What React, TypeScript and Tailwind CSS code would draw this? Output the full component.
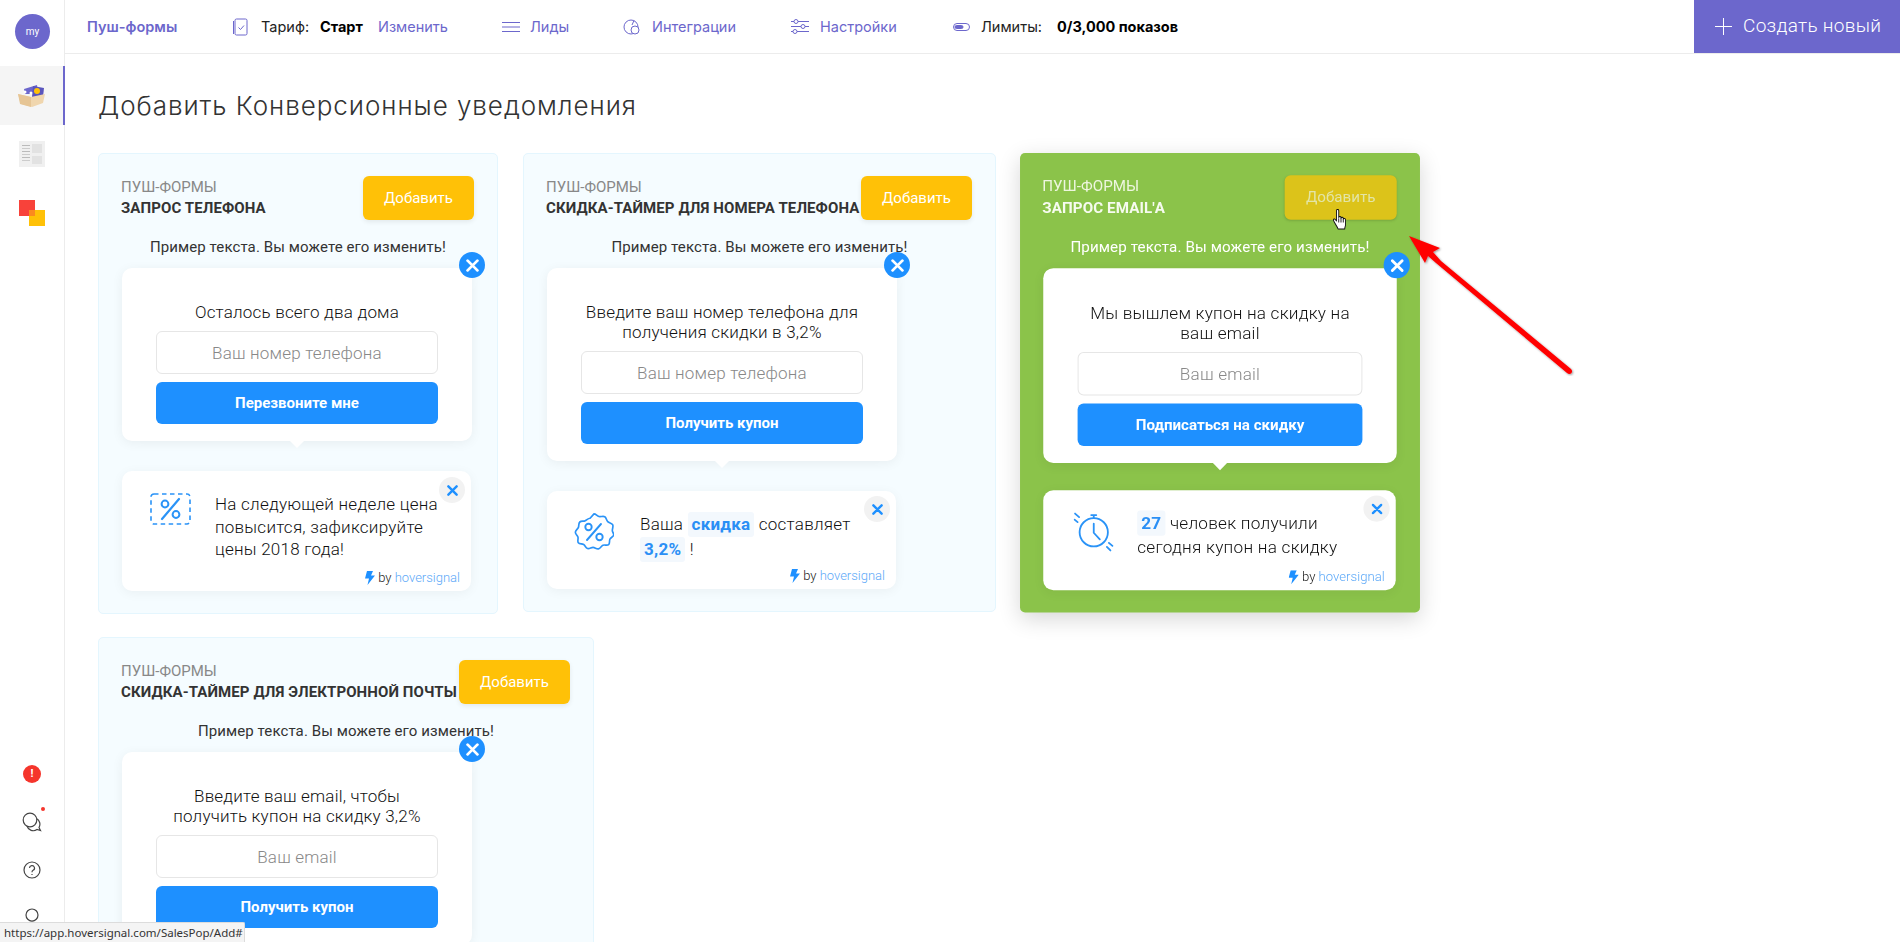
import React from "react";

const X = ({ c = "#fff", s = 12, w = 2.6 }: { c?: string; s?: number; w?: number }) => (
  <svg width={s} height={s} viewBox="0 0 12 12"><path d="M1.5 1.5l9 9M10.5 1.5l-9 9" stroke={c} strokeWidth={w} strokeLinecap="round" /></svg>
);

const By = () => (
  <div className="absolute right-[11px] bottom-[5px] flex items-center text-[13px] leading-[16px] font-light text-[#222]">
    <svg width="10" height="14" viewBox="0 0 10 14" className="mr-[3px]"><path d="M2 0h6L6 4.5h4L2.5 14l1.5-6.5H0z" fill="#1e90ff" /></svg>
    by&nbsp;<span className="text-[#5da9f8]">hoversignal</span>
  </div>
);

const Hi = ({ children }: { children: React.ReactNode }) => (
  <span className="inline-block bg-[#f3f8fd] rounded-[3px] px-[4px] h-[25px] leading-[25px] font-bold text-[#2a8ff5]">{children}</span>
);

const Popup = ({ text, ph, btn }: { text: React.ReactNode; ph: string; btn: string }) => (
  <div className="relative w-[350px] bg-white rounded-[10px] pt-[34px] px-[34px] pb-[17px] shadow-[0_2px_12px_rgba(0,0,0,0.06)]">
    <div className="absolute -right-[13px] -top-[16px] w-[26px] h-[26px] rounded-full bg-[#1e90ff] flex items-center justify-center"><X s={13} /></div>
    <div className="text-center text-[17px] leading-[20px] font-light text-[#111] tracking-[0.2px] whitespace-nowrap">{text}</div>
    <div className="mt-[9px] h-[43px] pt-[2px] border border-[#e6e6e6] rounded-[6px] flex items-center justify-center text-[17px] font-light text-[#888] tracking-[0.2px]">{ph}</div>
    <div className="mt-[8px] h-[42px] rounded-[6px] bg-[#1e90ff] flex items-center justify-center text-white text-[15px] font-bold">{btn}</div>
    <div className="absolute left-1/2 -ml-[7px] -bottom-[7px] w-0 h-0 border-x-[7px] border-x-transparent border-t-[7px] border-t-white" />
  </div>
);

const Push = ({ icon, h, pl, children, closeTop = 5, iconTop }: { icon: React.ReactNode; h: string; pl: string; children: React.ReactNode; closeTop?: number; iconTop: string }) => (
  <div className={`relative w-[349px] bg-white rounded-[10px] shadow-[0_2px_12px_rgba(0,0,0,0.05)] flex ${h}`}>
    <div className={`w-[93px] shrink-0 flex justify-center ${iconTop}`}>{icon}</div>
    <div className={`text-[17px] leading-[22.5px] font-light text-[#111] tracking-[0.25px] whitespace-nowrap ${pl}`}>{children}</div>
    <div className="absolute right-[6px] w-[26px] h-[26px] rounded-full bg-[#f2f2f2] flex items-center justify-center" style={{ top: closeTop }}><X c="#1e90ff" s={11} /></div>
    <By />
  </div>
);

const Percent = () => (
  <svg width="41" height="32" viewBox="0 0 41 32" fill="none" stroke="#2a93f7" strokeWidth="1.6">
    <rect x="1" y="1" width="39" height="30" rx="3" strokeDasharray="4.5 3.5" />
    <circle cx="15" cy="11" r="3.4" strokeWidth="2" /><circle cx="26" cy="21.5" r="3.4" strokeWidth="2" />
    <path d="M12 26L29 6" strokeWidth="2.2" strokeLinecap="round" />
  </svg>
);

const Badge = () => (
  <svg width="40" height="40" viewBox="0 0 40 40" fill="none" stroke="#2a93f7" strokeWidth="1.7" strokeLinejoin="round">
    <path d="M20 1.5c2 0 3 2.2 5 2.7s4.300-.8 6 .2 1.500 3.500 3 5 4 1.300 5 3 -.3 4-.3 6 2 3.300 1.300 5 -3 2.200-3.800 4 .2 4.200-1.300 5.500-4-.2-5.800.6-2.600 3.300-4.600 3.700-3.500-1.500-5.500-1.500-3.700 1.700-5.600 1.100-2.300-3-4-4-4.200-.2-5.400-1.800.2-4-.4-5.900-2.800-3-2.600-5 2.400-3 3.100-4.800 -.1-4.200 1.400-5.500 3.800-.4 5.600-1.300 2.900-2.500 4.900-2.500z" transform="translate(.4 .4) scale(.98)" />
    <circle cx="14.500" cy="15" r="3.200" strokeWidth="1.900" /><circle cx="25.500" cy="25" r="3.200" strokeWidth="1.900" />
    <path d="M13 28L27 12" strokeWidth="1.900" strokeLinecap="round" />
  </svg>
);

const Timer = () => (
  <svg width="40" height="40" viewBox="0 0 40 40" fill="none" stroke="#2a93f7" strokeWidth="1.800" strokeLinecap="round">
    <circle cx="20" cy="20.500" r="14" /><path d="M20 4v2.500M17.500 3.500h5M20 12v9l6 6.500" />
    <path d="M1.500 2l4 3.500M1 8l3 2.500M35 31l3.500 3M33 35l3.500 3.500" />
  </svg>
);

const Card = ({ w, title, children, ex, extra = "", green = false }: { w: string; title: string; children: React.ReactNode; ex: string; extra?: string; green?: boolean }) => (
  <div className={`${w} ${extra} shrink-0 rounded-[5px] pt-[22px] pl-[23px] pr-[23px] pb-[22px] ${green ? "bg-[#8bc34a] shadow-[0_6px_22px_rgba(0,0,0,0.16)]" : "bg-[#f5fcff] border border-[#e4f6fe]"}`}>
    <div className="flex justify-between h-[44px]">
      <div className="pt-[1px] -ml-px">
        <div className={`text-[15px] leading-[21px] ${green ? "text-[#eef6df]" : "text-[#888]"}`}>ПУШ-ФОРМЫ</div>
        <div className={`text-[15px] leading-[21px] font-bold tracking-[0.1px] whitespace-nowrap ${green ? "text-[#f6fbef]" : "text-[#333]"}`}>{title}</div>
      </div>
      {green ? (
        <div className="w-[111px] h-[44px] shrink-0 rounded-[6px] bg-[#dcc31a] text-[#e3e5a6] text-[15px] flex items-center justify-center shadow-sm">Добавить</div>
      ) : (
        <div className="w-[111px] h-[44px] shrink-0 rounded-[6px] bg-[#ffc107] text-white text-[15px] flex items-center justify-center shadow-[0_2px_5px_rgba(0,0,0,0.08)]">Добавить</div>
      )}
    </div>
    <div className={`mt-[17px] h-[20px] text-center text-[15px] leading-[20px] tracking-[0.1px] whitespace-nowrap ${green ? "text-white" : "text-[#333]"}`}>{ex}</div>
    <div className="mt-[11px]">{children}</div>
  </div>
);

const Nav = ({ children }: { children: React.ReactNode }) => <span className="text-[#6c67cc]">{children}</span>;

export default function App() {
  const ex = "Пример текста. Вы можете его изменить!";
  return (
    <div className="relative flex h-[942px] w-[1900px] overflow-hidden bg-white font-['Roboto',sans-serif]">
      <aside className="w-[65px] shrink-0 border-r border-[#ececec] flex flex-col h-[942px]">
        <div className="h-[66px] pt-[14px] flex justify-center shrink-0">
          <div className="w-[35px] h-[35px] rounded-full bg-[#6c67cc] text-white text-[10px] flex items-center justify-center ml-[1px]">my</div>
        </div>
        <div className="h-[59px] bg-[#f5f5f5] border-r-2 border-[#6c67cc] -mr-px flex items-center justify-center shrink-0">
          <svg width="27" height="23" viewBox="0 0 27 23">
            <path d="M6 5l13-4 1 9H7z" fill="#6c67cc" /><path d="M15 2l11 2-1 9H14z" fill="#5a55bd" />
            <circle cx="19" cy="7" r="3" fill="#ffc107" /><circle cx="7" cy="8" r="1.500" fill="#fff" /><circle cx="13" cy="9" r="1.500" fill="#fff" />
            <path d="M0 10l13 3 14-3-2 9-11 4-11-3z" fill="#f0d6ae" /><path d="M13 13v10l-11-3-2-10z" fill="#e6c595" />
          </svg>
        </div>
        <div className="mt-[16px] flex justify-center shrink-0">
          <div className="w-[26px] h-[26px] bg-[#f0f0f0] flex gap-[2px] p-[3px]">
            <div className="w-[8px] flex flex-col gap-[2px] pt-[1px]"><div className="h-px bg-[#bbb]" /><div className="h-px bg-[#ccc]" /><div className="h-px bg-[#bbb]" /><div className="h-px bg-[#ccc]" /><div className="h-px bg-[#bbb]" /><div className="h-px bg-[#ccc]" /></div>
            <div className="flex-1 flex flex-col gap-[3px]"><div className="flex-1 bg-[#e2e2e2]" /><div className="flex-1 bg-[#e2e2e2]" /></div>
          </div>
        </div>
        <div className="mt-[33px] flex justify-center shrink-0">
          <svg width="26" height="26" viewBox="0 0 26 26"><rect x="10" y="10" width="16" height="16" fill="#ffc107" /><rect width="16" height="16" fill="#f8423a" /><rect x="10" y="10" width="6" height="6" fill="#fb8a1f" /></svg>
        </div>
        <div className="mt-auto flex flex-col items-center shrink-0 gap-[29px] pb-[8px]">
          <div className="w-[18px] h-[18px] rounded-full bg-[#f5352c] text-white text-[11px] leading-[18px] text-center font-bold">!</div>
          <div className="relative h-[20px]">
            <svg width="20" height="20" viewBox="0 0 20 20" fill="none" stroke="#444" strokeWidth="1.200"><circle cx="8" cy="8" r="6.800" /><path d="M14.500 6.500a6.500 6.500 0 0 1 2.500 9l1.500 3-3.500-1a6.500 6.500 0 0 1-10-3.500" /></svg>
            <div className="absolute -top-[5px] -right-[3px] w-[4px] h-[4px] rounded-full bg-[#f5352c]" />
          </div>
          <svg width="18" height="18" viewBox="0 0 18 18" fill="none" stroke="#444" strokeWidth="1.200"><circle cx="9" cy="9" r="8" /><path d="M6.500 7a2.500 2.500 0 1 1 3.600 2.300c-.7.400-1.100.9-1.100 1.900M9 13v1" /></svg>
          <svg width="18" height="26" viewBox="0 0 18 26" fill="none" stroke="#444" strokeWidth="1.200"><circle cx="9" cy="7" r="6" /><path d="M2 25c0-6 3-11 7-11s7 5 7 11" /></svg>
        </div>
      </aside>

      <main className="flex-1 min-w-0 flex flex-col">
        <header className="h-[54px] shrink-0 border-b border-[#ececec] flex items-center font-['Inter',sans-serif] text-[14.500px] relative">
          <span className="ml-[22px] w-[145px] shrink-0 font-semibold text-[#6c67cc]">Пуш-формы</span>
          <svg width="18" height="18" viewBox="0 0 18 18" fill="none" stroke="#6c67cc" strokeWidth="1"><rect x="3" y="1" width="12" height="16" rx="1.500" /><path d="M1.500 3v13M6.500 9.500l2 2 3.500-4" /></svg>
          <span className="ml-[11px] w-[59px] shrink-0 text-[#222]">Тариф:</span>
          <span className="w-[58px] shrink-0 font-bold text-black">Старт</span>
          <span className="w-[124px] shrink-0"><Nav>Изменить</Nav></span>
          <svg width="18" height="12" viewBox="0 0 18 12" stroke="#6c67cc" strokeWidth="1"><path d="M0 1.500h18M0 6h18M0 10.500h18" /></svg>
          <span className="ml-[10px] w-[93px] shrink-0"><Nav>Лиды</Nav></span>
          <svg width="18" height="18" viewBox="0 0 18 18" fill="none" stroke="#6c67cc" strokeWidth="1"><circle cx="8" cy="9" r="7" /><circle cx="12" cy="12" r="4" fill="#fff" /><path d="M11 2.500L9 7" /></svg>
          <span className="ml-[11px] w-[139px] shrink-0"><Nav>Интеграции</Nav></span>
          <svg width="18" height="15" viewBox="0 0 18 15" fill="none" stroke="#6c67cc" strokeWidth="1"><path d="M0 2.500h3M7 2.500h11M0 7.500h10M14 7.500h4M0 12.500h2M6 12.500h12" /><circle cx="5" cy="2.500" r="2" /><circle cx="12" cy="7.500" r="2" /><circle cx="4" cy="12.500" r="2" /></svg>
          <span className="ml-[11px] w-[133px] shrink-0"><Nav>Настройки</Nav></span>
          <svg width="17" height="8" viewBox="0 0 17 8" fill="none" stroke="#6c67cc" strokeWidth="1"><rect x=".5" y=".5" width="16" height="7" rx="3.500" /><rect x="2" y="2.500" width="8" height="3" rx="1.500" fill="#6c67cc" /></svg>
          <span className="ml-[11px] w-[76px] shrink-0 text-[#222]">Лимиты:</span>
          <span className="font-bold text-black">0/3,000 показов</span>
          <div className="ml-auto self-start w-[206px] h-[53px] bg-[#6c67cc] flex items-center text-white font-light">
            <svg width="17" height="17" viewBox="0 0 17 17" className="ml-[21px] mr-[11px]" stroke="#fff" strokeWidth="1"><path d="M8.500 0v17M0 8.500h17" /></svg>
            <span className="text-[19px] tracking-[0.3px] font-['Roboto',sans-serif]">Создать новый</span>
          </div>
        </header>

        <div className="px-[33px]">
          <h1 className="mt-[35px] h-[34px] text-[26px] tracking-[0.95px] leading-[34px] font-light text-[#333] font-['Inter',sans-serif] whitespace-nowrap">Добавить Конверсионные уведомления</h1>
          <div className="mt-[30px] flex flex-wrap items-start gap-x-[25px] gap-y-[23px]">
            <Card w="w-[400px]" title="ЗАПРОС ТЕЛЕФОНА" ex={ex}>
              <Popup text="Осталось всего два дома" ph="Ваш номер телефона" btn="Перезвоните мне" />
              <div className="mt-[30px]">
                <Push icon={<Percent />} h="h-[120px]" pl="pt-[22px]" iconTop="pt-[22px] pl-[4px]" closeTop={6}>На следующей неделе цена<br />повысится, зафиксируйте<br />цены 2018 года!</Push>
              </div>
            </Card>
            <Card w="w-[473px]" title="СКИДКА-ТАЙМЕР ДЛЯ НОМЕРА ТЕЛЕФОНА" ex={ex}>
              <Popup text={<>Введите ваш номер телефона для<br />получения скидки в 3,2%</>} ph="Ваш номер телефона" btn="Получить купон" />
              <div className="mt-[30px]">
                <Push icon={<Badge />} h="h-[98px]" pl="pt-[21px]" iconTop="pt-[21px]"><>Ваша <Hi>скидка</Hi> составляет<br /><Hi>3,2%</Hi> !</></Push>
              </div>
            </Card>
            <Card w="w-[396px]" extra="scale-[1.01] origin-top border-0 ml-px" title="ЗАПРОС EMAIL'А" ex={ex} green>
              <Popup text={<>Мы вышлем купон на скидку на<br />ваш email</>} ph="Ваш email" btn="Подписаться на скидку" />
              <div className="mt-[27px]">
                <Push icon={<Timer />} h="h-[99px]" pl="pt-[20px]" iconTop="pt-[21px] pl-[7px]"><><Hi>27</Hi> человек получили<br />сегодня купон на скидку</></Push>
              </div>
            </Card>
            <Card w="w-[496px]" title="СКИДКА-ТАЙМЕР ДЛЯ ЭЛЕКТРОННОЙ ПОЧТЫ" ex={ex}>
              <Popup text={<>Введите ваш email, чтобы<br />получить купон на скидку 3,2%</>} ph="Ваш email" btn="Получить купон" />
            </Card>
          </div>
        </div>
      </main>

      <svg className="absolute left-[1332px] top-[209px]" width="18" height="22" viewBox="0 0 24 26" preserveAspectRatio="none" fill="#fff" stroke="#111" strokeWidth="1.200" strokeLinejoin="round">
        <path d="M6 2c0-2 3-2 3 0v8c0-1.500 3-1.500 3 0v1c0-1.500 3-1.500 3 0v1c0-1.500 3-1 3 .500v6c0 2-1 3-1 5H8c-1-3-5-7-6-10-.5-1.500 1.500-2.500 2.500-1L6 14z" />
        <path d="M9 11v5M12 11v5M15 12v4" fill="none" />
      </svg>

      <svg className="absolute left-[1405px] top-[232px]" width="172" height="144" viewBox="0 0 172 144">
        <defs><filter id="s" x="-10%" y="-10%" width="120%" height="120%"><feDropShadow dx="1" dy="1" stdDeviation="1" floodColor="#000" floodOpacity="0.4" /></filter></defs>
        <path d="M4 4l31 12-7 4 8 9 130 108c3 3-1 7-4 4L31 31l-8-7-3 7z" fill="#f00" filter="url(#s)" />
      </svg>

      <div className="absolute left-0 bottom-0 h-[20px] w-[245px] bg-[#f4f4f4] border-t border-r border-[#dcdcdc] rounded-tr-[2px] pl-[4px] text-[11.500px] leading-[19px] text-[#333] font-['Noto_Sans',sans-serif] whitespace-nowrap">https://app.hoversignal.com/SalesPop/Add#</div>
    </div>
  );
}
